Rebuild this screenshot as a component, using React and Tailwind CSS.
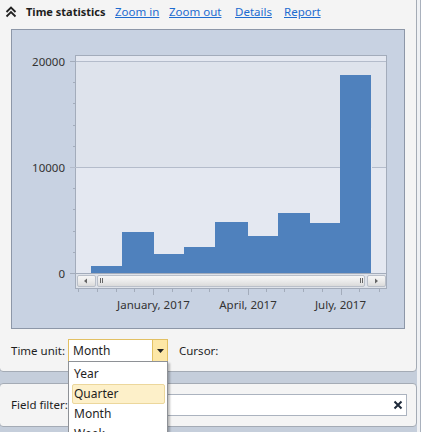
const bars = [
  { x: 91, w: 31, top: 266 },
  { x: 122, w: 32, top: 232 },
  { x: 154, w: 30, top: 254 },
  { x: 184, w: 31, top: 247 },
  { x: 215, w: 33, top: 222 },
  { x: 248, w: 30, top: 236 },
  { x: 278, w: 32, top: 213 },
  { x: 310, w: 30, top: 223 },
  { x: 340, w: 31, top: 75 },
];

const xTicks = [78, 97, 116, 134, 153, 172, 191, 209, 228, 248, 266, 284, 303, 322, 341, 359, 379];
const majorX = [153, 248, 341];
const yMinor = [82, 103, 125, 146, 188, 209, 231, 252];

function Chevrons() {
  return (
    <svg width="12" height="12" viewBox="0 0 12 12" className="shrink-0">
      <path d="M1.5 6 L6 1.5 L10.5 6 M1.5 10.5 L6 6 L10.5 10.5" fill="none" stroke="#222" strokeWidth="1.8" />
    </svg>
  );
}

function Chart() {
  return (
    <svg width="392" height="298" viewBox="12 30 392 298" className="block">
      <defs>
        <linearGradient id="sb" x1="0" y1="0" x2="0" y2="1">
          <stop offset="0" stopColor="#f7f7f7" />
          <stop offset="0.5" stopColor="#ebebeb" />
          <stop offset="1" stopColor="#d9d9d9" />
        </linearGradient>
      </defs>
      {/* plot bands */}
      <rect x="75.5" y="55.5" width="311" height="233" fill="#e4e8f1" stroke="#a3acbb" />
      <rect x="76" y="61" width="310" height="106" fill="#dee3ec" />
      <line x1="76" y1="61.5" x2="386" y2="61.5" stroke="#b4bccb" />
      <line x1="70" y1="167.5" x2="386" y2="167.5" stroke="#b4bccb" />
      <line x1="70" y1="61.5" x2="76" y2="61.5" stroke="#a3acbb" />
      {yMinor.map((y) => (
        <line key={y} x1="73" y1={y + 0.5} x2="76" y2={y + 0.5} stroke="#a3acbb" />
      ))}
      {bars.map((b, i) => (
        <rect key={i} x={b.x} y={b.top} width={b.w} height={273 - b.top} fill="#4f81bd" />
      ))}
      <rect x="371" y="128" width="1" height="145" fill="#e4e8f1" />
      <line x1="70" y1="273.5" x2="386" y2="273.5" stroke="#a3acbb" />
      {/* y labels */}
      <g fontFamily="'Noto Sans', 'DejaVu Sans', sans-serif" fontSize="11.5" fill="#333" textAnchor="end">
        <text x="65" y="65.5">20000</text>
        <text x="65" y="171.5">10000</text>
        <text x="65" y="277.5">0</text>
      </g>
      {/* scrollbar */}
      <rect x="76" y="274" width="310" height="14" fill="#dfe3ea" />
      <rect x="77.5" y="275.5" width="18" height="11" rx="1.5" fill="url(#sb)" stroke="#b9bfc9" />
      <path d="M84 281 L87 278.5 L87 283.5 Z" fill="#666" />
      <rect x="97.5" y="275.5" width="267" height="11" rx="1.5" fill="url(#sb)" stroke="#b9bfc9" />
      <rect x="100" y="278" width="1" height="5" fill="#666" />
      <rect x="102" y="278" width="1" height="5" fill="#666" />
      <rect x="360" y="278" width="1" height="5" fill="#666" />
      <rect x="362" y="278" width="1" height="5" fill="#666" />
      <rect x="367.5" y="275.5" width="18" height="11" rx="1.5" fill="url(#sb)" stroke="#b9bfc9" />
      <path d="M378 281 L375 278.5 L375 283.5 Z" fill="#666" />
      <line x1="75.5" y1="288.5" x2="386.5" y2="288.5" stroke="#a3acbb" />
      {xTicks.map((x) => (
        <line key={x} x1={x + 0.5} y1="289" x2={x + 0.5} y2={majorX.includes(x) ? 295 : 292} stroke="#a3acbb" />
      ))}
      <g fontFamily="'Noto Sans', 'DejaVu Sans', sans-serif" fontSize="11.5" fill="#333" textAnchor="middle">
        <text x="153.5" y="309">January, 2017</text>
        <text x="248" y="309">April, 2017</text>
        <text x="340.5" y="309">July, 2017</text>
      </g>
    </svg>
  );
}

export default function App() {
  const font = { fontFamily: "'Noto Sans', 'DejaVu Sans', sans-serif" };
  return (
    <div className="relative flex h-[432px] w-[421px] overflow-hidden bg-[#c5cedb] text-[11.5px] text-[#1e1e1e]" style={font}>
      <div className="flex w-[417px] shrink-0 flex-col">
        {/* statistics panel */}
        <div className="-ml-px -mt-[4px] flex h-[376px] flex-col rounded-[4px] border border-[#a4abb5] bg-[#f4f4f4] pt-[7px]">
          <div className="flex h-[16px] items-center pl-[5px] leading-[16px] whitespace-nowrap">
            <Chevrons />
            <span className="ml-[9px] w-[89px] text-[11px] font-bold">Time statistics</span>
            <a className="w-[54px] text-[#1d6bd0]" href="#"><span className="underline">Zoom in</span></a>
            <a className="w-[66px] text-[#1d6bd0]" href="#"><span className="underline">Zoom out</span></a>
            <a className="w-[49px] text-[#1d6bd0]" href="#"><span className="underline">Details</span></a>
            <a className="text-[#1d6bd0]" href="#"><span className="underline">Report</span></a>
          </div>
          <div className="ml-[11px] mt-[9px] h-[300px] w-[394px] border border-[#8d97a8] bg-[#c8d2e2]">
            <Chart />
          </div>
          <div className="mt-[10px] flex items-center pl-[11px]">
            <span className="w-[57px]">Time unit:</span>
            <div className="flex h-[23px] w-[100px] border border-[#e2c063] bg-white">
              <span className="flex-1 pl-[4px] text-[12px] leading-[21px]">Month</span>
              <span className="flex w-[15px] items-center justify-center border-l border-[#e2c063] bg-[#fde7a6]">
                <svg width="7" height="4" viewBox="0 0 7 4"><path d="M0 0 H7 L3.5 4 Z" fill="#222" /></svg>
              </span>
            </div>
            <span className="ml-[11px]">Cursor:</span>
          </div>
        </div>
        {/* field filter panel */}
        <div className="-ml-px mt-[11px] flex h-[44px] items-center rounded-[4px] border border-[#a4abb5] bg-[#f4f4f4] pl-[11px]">
          <span className="w-[57px] whitespace-nowrap">Field filter:</span>
          <div className="flex h-[22px] w-[339px] items-center justify-end border border-[#abb3bf] bg-white pr-[3px]">
            <svg width="10" height="10" viewBox="0 0 10 10"><path d="M1.5 1.5 L8.5 8.5 M8.5 1.5 L1.5 8.5" stroke="#1e2a3a" strokeWidth="2" /></svg>
          </div>
        </div>
      </div>
      <div className="w-[4px] border-r border-[#a9b1bd] bg-[#eff1f4]" />
      {/* open dropdown list */}
      <div className="absolute left-[68px] top-[361px] w-[100px] border border-[#8e9196] bg-white pl-[3px] pr-[2px] pt-[2px] text-[12px] shadow-[2px_2px_2px_rgba(0,0,0,0.25)]">
        <div className="h-[20px] pl-[2px] leading-[20px]">Year</div>
        <div className="h-[20px] rounded-[2px] border border-[#ecd79c] bg-[#fdf0c9] pl-[1px] leading-[18px]">Quarter</div>
        <div className="h-[20px] pl-[2px] leading-[20px]">Month</div>
        <div className="h-[20px] pl-[2px] leading-[20px]">Week</div>
      </div>
    </div>
  );
}
